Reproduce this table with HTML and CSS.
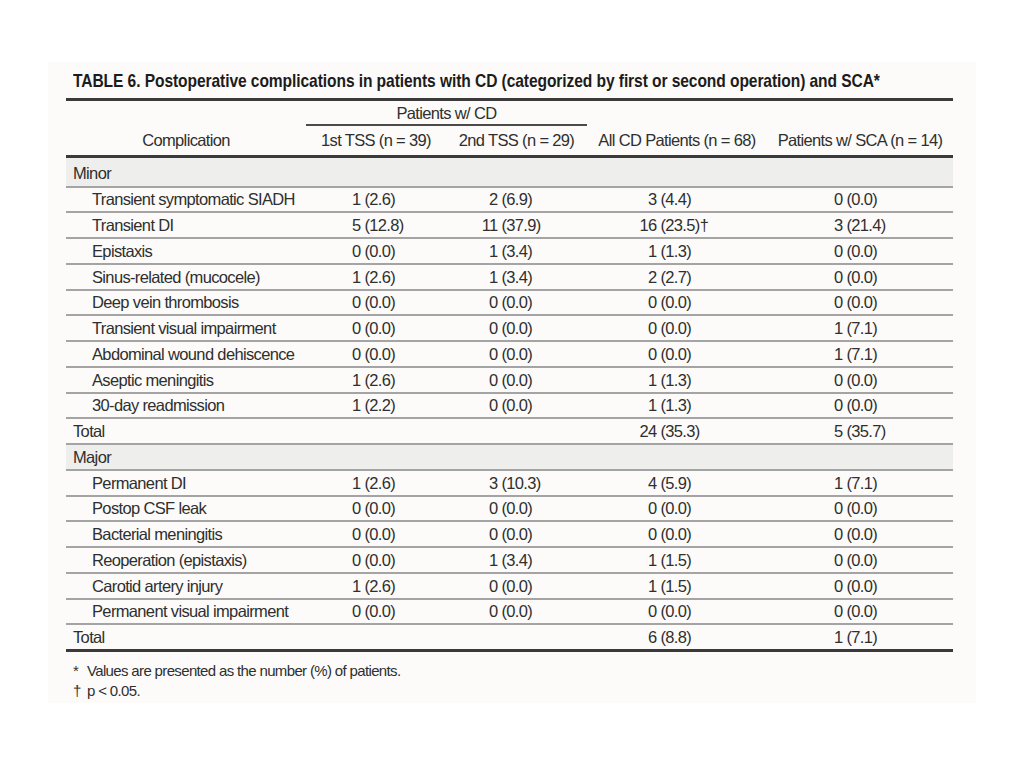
FILE: index.html
```html
<!DOCTYPE html>
<html lang="en">
<head>
<meta charset="utf-8">
<title>Table 6</title>
<link rel="stylesheet" href="styles.css">
</head>
<body>
<div class="panel">
  <h1 class="title">TABLE 6. Postoperative complications in patients with CD (categorized by first or second operation) and SCA*</h1>
  <table class="tbl">
    <colgroup>
      <col class="c0"><col class="c1"><col class="c2"><col class="c3"><col class="c4">
    </colgroup>
    <thead>
      <tr class="hr1">
        <th rowspan="2" class="hb">Complication</th>
        <th colspan="2" class="group">Patients w/ CD</th>
        <th rowspan="2" class="hb">All CD Patients (n = 68)</th>
        <th rowspan="2" class="hb">Patients w/ SCA (n = 14)</th>
      </tr>
      <tr class="hr2">
        <th class="hb">1st TSS (n = 39)</th>
        <th class="hb">2nd TSS (n = 29)</th>
      </tr>
    </thead>
    <tbody>
      <tr class="cat first"><td class="lab">Minor</td><td></td><td></td><td></td><td></td></tr>
      <tr><td class="item">Transient symptomatic SIADH</td><td class="v v1"><span class="n">1</span> (2.6)</td><td class="v v2"><span class="n">2</span> (6.9)</td><td class="v v3"><span class="n">3</span> (4.4)</td><td class="v v4"><span class="n">0</span> (0.0)</td></tr>
      <tr><td class="item">Transient DI</td><td class="v v1"><span class="n">5</span> (12.8)</td><td class="v v2"><span class="n">11</span> (37.9)</td><td class="v v3"><span class="n">16</span> (23.5)†</td><td class="v v4"><span class="n">3</span> (21.4)</td></tr>
      <tr><td class="item">Epistaxis</td><td class="v v1"><span class="n">0</span> (0.0)</td><td class="v v2"><span class="n">1</span> (3.4)</td><td class="v v3"><span class="n">1</span> (1.3)</td><td class="v v4"><span class="n">0</span> (0.0)</td></tr>
      <tr><td class="item">Sinus-related (mucocele)</td><td class="v v1"><span class="n">1</span> (2.6)</td><td class="v v2"><span class="n">1</span> (3.4)</td><td class="v v3"><span class="n">2</span> (2.7)</td><td class="v v4"><span class="n">0</span> (0.0)</td></tr>
      <tr><td class="item">Deep vein thrombosis</td><td class="v v1"><span class="n">0</span> (0.0)</td><td class="v v2"><span class="n">0</span> (0.0)</td><td class="v v3"><span class="n">0</span> (0.0)</td><td class="v v4"><span class="n">0</span> (0.0)</td></tr>
      <tr><td class="item">Transient visual impairment</td><td class="v v1"><span class="n">0</span> (0.0)</td><td class="v v2"><span class="n">0</span> (0.0)</td><td class="v v3"><span class="n">0</span> (0.0)</td><td class="v v4"><span class="n">1</span> (7.1)</td></tr>
      <tr><td class="item">Abdominal wound dehiscence</td><td class="v v1"><span class="n">0</span> (0.0)</td><td class="v v2"><span class="n">0</span> (0.0)</td><td class="v v3"><span class="n">0</span> (0.0)</td><td class="v v4"><span class="n">1</span> (7.1)</td></tr>
      <tr><td class="item">Aseptic meningitis</td><td class="v v1"><span class="n">1</span> (2.6)</td><td class="v v2"><span class="n">0</span> (0.0)</td><td class="v v3"><span class="n">1</span> (1.3)</td><td class="v v4"><span class="n">0</span> (0.0)</td></tr>
      <tr><td class="item">30-day readmission</td><td class="v v1"><span class="n">1</span> (2.2)</td><td class="v v2"><span class="n">0</span> (0.0)</td><td class="v v3"><span class="n">1</span> (1.3)</td><td class="v v4"><span class="n">0</span> (0.0)</td></tr>
      <tr><td class="lab">Total</td><td></td><td></td><td class="v v3"><span class="n">24</span> (35.3)</td><td class="v v4"><span class="n">5</span> (35.7)</td></tr>
      <tr class="cat"><td class="lab">Major</td><td></td><td></td><td></td><td></td></tr>
      <tr><td class="item">Permanent DI</td><td class="v v1"><span class="n">1</span> (2.6)</td><td class="v v2"><span class="n">3</span> (10.3)</td><td class="v v3"><span class="n">4</span> (5.9)</td><td class="v v4"><span class="n">1</span> (7.1)</td></tr>
      <tr><td class="item">Postop CSF leak</td><td class="v v1"><span class="n">0</span> (0.0)</td><td class="v v2"><span class="n">0</span> (0.0)</td><td class="v v3"><span class="n">0</span> (0.0)</td><td class="v v4"><span class="n">0</span> (0.0)</td></tr>
      <tr><td class="item">Bacterial meningitis</td><td class="v v1"><span class="n">0</span> (0.0)</td><td class="v v2"><span class="n">0</span> (0.0)</td><td class="v v3"><span class="n">0</span> (0.0)</td><td class="v v4"><span class="n">0</span> (0.0)</td></tr>
      <tr><td class="item">Reoperation (epistaxis)</td><td class="v v1"><span class="n">0</span> (0.0)</td><td class="v v2"><span class="n">1</span> (3.4)</td><td class="v v3"><span class="n">1</span> (1.5)</td><td class="v v4"><span class="n">0</span> (0.0)</td></tr>
      <tr><td class="item">Carotid artery injury</td><td class="v v1"><span class="n">1</span> (2.6)</td><td class="v v2"><span class="n">0</span> (0.0)</td><td class="v v3"><span class="n">1</span> (1.5)</td><td class="v v4"><span class="n">0</span> (0.0)</td></tr>
      <tr><td class="item">Permanent visual impairment</td><td class="v v1"><span class="n">0</span> (0.0)</td><td class="v v2"><span class="n">0</span> (0.0)</td><td class="v v3"><span class="n">0</span> (0.0)</td><td class="v v4"><span class="n">0</span> (0.0)</td></tr>
      <tr class="last"><td class="lab">Total</td><td></td><td></td><td class="v v3"><span class="n">6</span> (8.8)</td><td class="v v4"><span class="n">1</span> (7.1)</td></tr>
    </tbody>
  </table>
  <div class="notes">
    <div class="note"><span class="sym">*</span><span>Values are presented as the number (%) of patients.</span></div>
    <div class="note"><span class="sym">†</span><span>p &lt; 0.05.</span></div>
  </div>
</div>
</body>
</html>
```

FILE: styles.css
```css
html, body {
  margin: 0;
  padding: 0;
  background: #ffffff;
}

body {
  padding-top: 62px;
  font-family: "Liberation Sans", Arial, sans-serif;
  color: #2f2f2f;
}

.panel {
  margin-left: 48px;
  width: 928px;
  height: 641px;
  box-sizing: border-box;
  padding: 8px 0 0 18px;
  background: #fcfbf9;
}

.title {
  margin: 0 0 6px 7px;
  font-family: "Liberation Sans", Arial, sans-serif;
  font-weight: bold;
  font-size: 18.5px;
  line-height: 22px;
  letter-spacing: -0.1px;
  color: #1c1c1c;
  white-space: nowrap;
  transform: scaleX(0.842);
  transform-origin: left center;
}

.tbl {
  width: 887px;
  border-collapse: separate;
  border-spacing: 0;
  table-layout: fixed;
  border-top: 3px solid #3a3a3a;
  font-size: 16.5px;
  letter-spacing: -0.65px;
}

.c0 { width: 240px; }
.c1 { width: 140px; }
.c2 { width: 141px; }
.c3 { width: 180px; }
.c4 { width: 186px; }

.tbl th {
  font-weight: normal;
  text-align: center;
  padding: 0;
  white-space: nowrap;
}

.hr1 th.group {
  height: 25px;
  box-sizing: border-box;
  border-bottom: 2px solid #4a4a4a;
  padding-top: 1px;
}

.tbl th.hb {
  border-bottom: 3px solid #3a3a3a;
  vertical-align: bottom;
  padding-bottom: 5px;
}

.hr2 th {
  height: 32px;
  box-sizing: border-box;
}

.tbl td {
  height: 25.75px;
  box-sizing: border-box;
  padding: 1px 0 0 0;
  border-bottom: 2px solid #a4a4a4;
  white-space: nowrap;
}

.tbl tr.cat td {
  background: #eeeeec;
}

.tbl tr.first td {
  height: 29.5px;
  padding-top: 3px;
}

.tbl tr.last td {
  height: 27px;
  border-bottom: 3px solid #3a3a3a;
}

.lab { padding-left: 7px !important; }
.item { padding-left: 26px !important; }

.n {
  display: inline-block;
  width: 17px;
  text-align: right;
}

.v1 { padding-left: 37.5px !important; }
.v2 { padding-left: 34.5px !important; }
.v3 { padding-left: 52.5px !important; }
.v4 { padding-left: 58.5px !important; }

.notes {
  margin-top: 9px;
  padding-left: 7px;
  font-size: 15px;
  line-height: 20px;
  letter-spacing: -0.65px;
}

.note {
  display: flex;
}

.sym {
  width: 14px;
  flex: none;
}
```
